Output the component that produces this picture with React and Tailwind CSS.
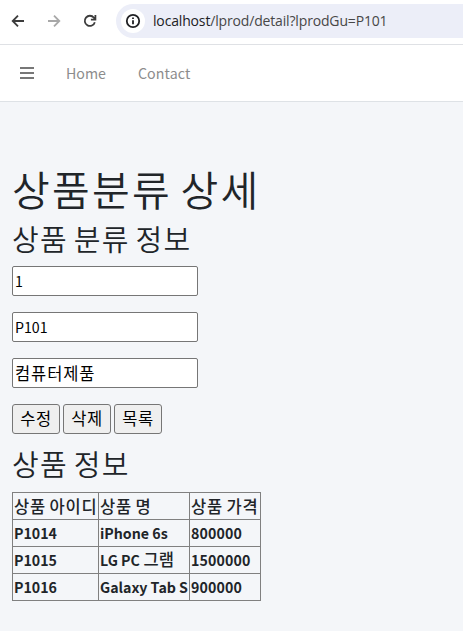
const fields = [
  { name: 'lprodId', value: '1', style: 'text-[14.2px]' },
  { name: 'lprodGu', value: 'P101', style: 'text-[14.2px]' },
  { name: 'lprodNm', value: '컴퓨터제품', style: 'text-[16.5px] tracking-[0.9px]' },
]

const products = [
  { id: 'P1014', name: 'iPhone 6s', price: '800000' },
  { id: 'P1015', name: 'LG PC', korean: '그램', price: '1500000' },
  { id: 'P1016', name: 'Galaxy Tab S', price: '900000' },
]

function Icon({ className, children }) {
  return (
    <svg viewBox="0 0 16 16" fill="none" stroke="currentColor" strokeWidth="1.8" className={`size-4 ${className}`}>
      {children}
    </svg>
  )
}

function AddressBar() {
  return (
    <div className="flex h-[45px] items-center border-b border-[#dfe1e5] pb-[2px] bg-white">
      <Icon className="ml-[10px] text-[#3c3c3c]">
        <path d="M14 8H3.2M8 2.7L2.7 8L8 13.3" />
      </Icon>
      <Icon className="ml-5 text-[#a8a8a8]">
        <path d="M2 8H12.8M8 2.7L13.3 8L8 13.3" />
      </Icon>
      <Icon className="ml-5 text-[#3c3c3c]">
        <path d="M12.8 9.2A5.1 5.1 0 1 1 11.9 4.7L13.3 6.3M13.4 2V6.6H8.9" />
      </Icon>
      <div className="ml-[18px] flex h-[34px] flex-1 items-center rounded-l-full bg-[#eceef8] pl-[5px]">
        <span className="flex size-6 items-center justify-center rounded-full bg-white">
          <Icon className="text-[#202124]">
            <circle cx="8" cy="8" r="6.2" />
            <path d="M8 7.2V11.3M8 4.5V6" />
          </Icon>
        </span>
        <span className="ml-2 pb-[2px] whitespace-nowrap font-['Open_Sans',sans-serif] text-[14px] tracking-[-0.16px] text-[#474747]">
          <span className="text-[#202124]">localhost</span>/lprod/detail?lprodGu=P101
        </span>
      </div>
    </div>
  )
}

function Navbar() {
  return (
    <nav className="flex h-[57px] items-center border-b border-[#dee2e6] bg-white text-[14.2px] text-[#8c8c8c]">
      <div className="ml-5 flex w-[14px] flex-col gap-[3px] text-[#777777]">
        <span className="h-[2px] bg-current"></span>
        <span className="h-[2px] bg-current"></span>
        <span className="h-[2px] bg-current"></span>
      </div>
      <a href="#" className="ml-8 pt-[2px]">Home</a>
      <a href="#" className="ml-8 pt-[2px] tracking-[0.1px]">Contact</a>
    </nav>
  )
}

function App() {
  return (
    <div className="min-h-screen bg-[#f4f6f9] font-['Noto_Sans_CJK_KR',sans-serif] text-[#212529]">
      <AddressBar />
      <Navbar />

      <main className="px-3 pt-[62px]">
        <h1 className="h-12 text-[41px] leading-12 font-[350] tracking-[2.3px] [word-spacing:-3px]">상품분류 상세</h1>
        <h3 className="mt-[9px] h-[34px] text-[29px] leading-[34px] font-[350] tracking-[1.3px] [word-spacing:-2px]">상품 분류 정보</h3>

        <form className="mt-[11px]">
          {fields.map((f) => (
            <p key={f.name} className="mb-4">
              <input
                name={f.name}
                defaultValue={f.value}
                className={`block h-[30px] w-[186px] rounded-[2px] border border-[#767676] bg-white px-[2px] text-black ${f.style}`}
              />
            </p>
          ))}
          <div className="flex gap-[3px]">
            {['수정', '삭제', '목록'].map((label) => (
              <button
                key={label}
                type="button"
                className="h-[30px] w-12 rounded-[3px] border border-[#767676] bg-[#efefef] pb-px text-[16.5px] leading-[27px] tracking-[0.6px] text-black"
              >
                {label}
              </button>
            ))}
          </div>
        </form>

        <h3 className="mt-3 h-[34px] text-[29px] leading-[34px] font-[350] tracking-[1.3px] [word-spacing:-2px]">상품 정보</h3>

        <table className="mt-3 w-[249px] table-fixed border-collapse text-left">
          <colgroup>
            <col className="w-[86px]" />
            <col className="w-[91px]" />
            <col className="w-[71px]" />
          </colgroup>
          <thead>
            <tr className="h-[27px] text-[16.5px] leading-6 tracking-[0.8px] whitespace-nowrap [word-spacing:-1px]">
              <th className="border border-[#808080] p-px font-medium">상품 아이디</th>
              <th className="border border-[#808080] p-px font-medium">상품 명</th>
              <th className="border border-[#808080] p-px font-medium">상품 가격</th>
            </tr>
          </thead>
          <tbody>
            {products.map((p) => (
              <tr key={p.id} className="h-[27px] text-[14.2px] leading-6 font-bold whitespace-nowrap">
                <td className="border border-[#808080] p-px">{p.id}</td>
                <td className="border border-[#808080] p-px">
                  {p.name}
                  {p.korean && <span className="text-[16.5px] leading-none font-medium"> {p.korean}</span>}
                </td>
                <td className="border border-[#808080] p-px tracking-[0.15px]">{p.price}</td>
              </tr>
            ))}
          </tbody>
        </table>
      </main>
    </div>
  )
}

export default App
